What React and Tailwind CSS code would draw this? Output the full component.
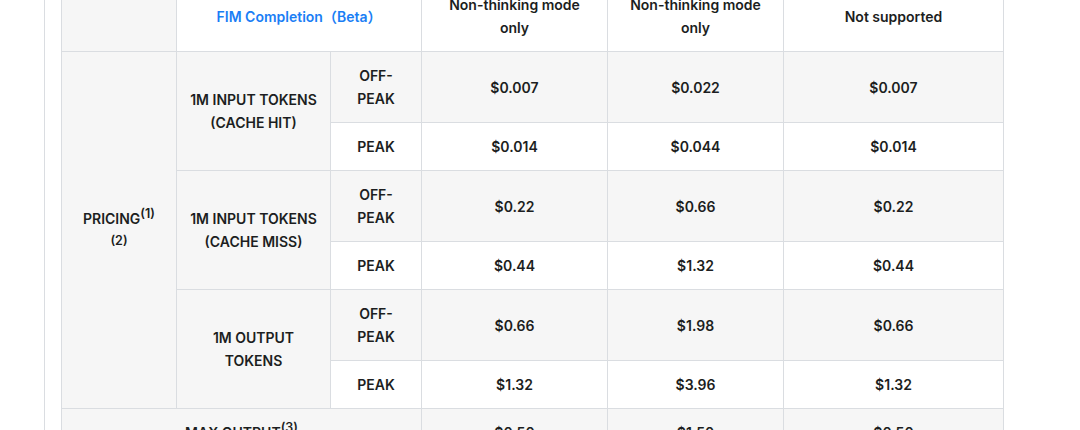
const gray = 'bg-[#f6f6f6]'
const base = 'border border-[#dadde1] px-3 py-3 text-center align-middle font-semibold'

const tiers = [
  { label: ['1M INPUT TOKENS', '(CACHE HIT)'], offPeak: ['$0.007', '$0.022', '$0.007'], peak: ['$0.014', '$0.044', '$0.014'] },
  { label: ['1M INPUT TOKENS', '(CACHE MISS)'], offPeak: ['$0.22', '$0.66', '$0.22'], peak: ['$0.44', '$1.32', '$0.44'] },
  { label: ['1M OUTPUT', 'TOKENS'], offPeak: ['$0.66', '$1.98', '$0.66'], peak: ['$1.32', '$3.96', '$1.32'] },
]

function App() {
  return (
    <div className="w-[1080px] h-[430px] overflow-hidden bg-white pl-[44px] text-[#1c1e21] font-['Inter','Noto_Sans_CJK_SC',sans-serif] text-[14px] leading-[23px]">
      <div className="flow-root h-full border-l border-[#dadde1] pl-4">
        <table className="-mt-[20px] w-[942px] table-fixed border-collapse">
          <colgroup>
            <col className="w-[115px]" />
            <col className="w-[154px]" />
            <col className="w-[91px]" />
            <col className="w-[186px]" />
            <col className="w-[176px]" />
            <col className="w-[220px]" />
          </colgroup>
          <tbody>
            <tr>
              <td className={`${base} ${gray}`}></td>
              <td colSpan={2} className={`${base} bg-white`}>
                <a className="text-[#1a7ef5]">FIM Completion（Beta）</a>
              </td>
              <td className={`${base} bg-white`}>Non-thinking mode<br />only</td>
              <td className={`${base} bg-white`}>Non-thinking mode<br />only</td>
              <td className={`${base} bg-white`}>Not supported</td>
            </tr>
            {tiers.map((t, i) => [
              <tr key={`o${i}`}>
                {i === 0 && (
                  <td rowSpan={6} className={`${base} ${gray}`}>
                    PRICING<sup className="text-[12.5px]">(1)</sup>
                    <br />
                    <sup className="text-[12.5px] top-[-2px]">(2)</sup>
                  </td>
                )}
                <td rowSpan={2} className={`${base} ${gray}`}>
                  {t.label[0]}
                  <br />
                  {t.label[1]}
                </td>
                <td className={`${base} ${gray}`}>OFF-<br />PEAK</td>
                {t.offPeak.map((p, j) => (
                  <td key={j} className={`${base} ${gray}`}>{p}</td>
                ))}
              </tr>,
              <tr key={`p${i}`}>
                <td className={`${base} bg-white`}>PEAK</td>
                {t.peak.map((p, j) => (
                  <td key={j} className={`${base} bg-white`}>{p}</td>
                ))}
              </tr>,
            ])}
            <tr>
              <td colSpan={3} className={`${base} ${gray}`}>
                MAX OUTPUT<sup className="text-[12.5px]">(3)</sup>
              </td>
              <td className={`${base} ${gray}`}>$0.50</td>
              <td className={`${base} ${gray}`}>$1.50</td>
              <td className={`${base} ${gray}`}>$0.50</td>
            </tr>
          </tbody>
        </table>
      </div>
    </div>
  )
}

export default App
